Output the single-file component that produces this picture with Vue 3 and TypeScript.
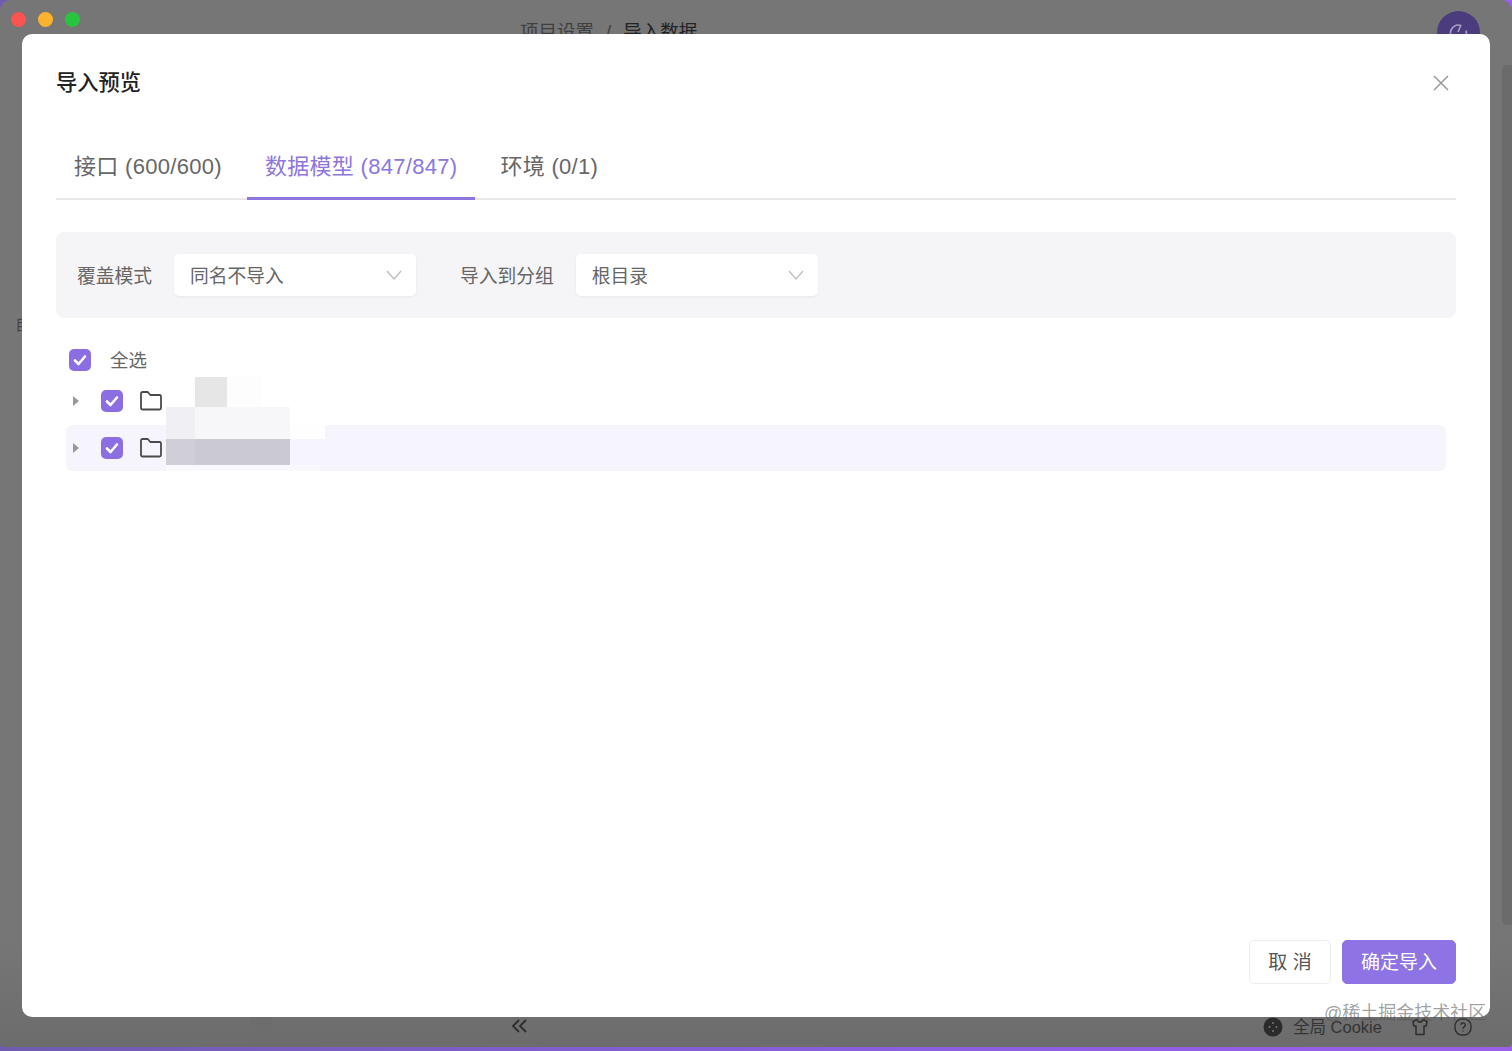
<template>
  <div class="desktop">
    <div class="window">
      <span class="dot red"></span>
      <span class="dot yellow"></span>
      <span class="dot green"></span>
      <div class="crumbs">项目设置<i>/</i><b>导入数据</b></div>
      <div class="avatar">
        <svg width="22" height="22" viewBox="0 0 22 22" fill="none" stroke="#a79fc6" stroke-width="1.6"><path d="M13 3.5a8 8 0 1 0 5 5" /><path d="M13 3l-3 7" /></svg>
      </div>
      <div class="side-letter">自</div>
      <div class="scrollbar"></div>
      <div class="side-item"></div>
      <div class="collapse">
        <svg width="18" height="14" viewBox="0 0 18 14" fill="none" stroke="#2e2e2e" stroke-width="1.8"><path d="M8 1 2 7l6 6M15 1 9 7l6 6" /></svg>
      </div>
      <div class="status">
        <svg width="20" height="20" viewBox="0 0 20 20"><circle cx="10" cy="10" r="9.500" fill="#2b2b2b" /><circle cx="6.500" cy="10" r="1" fill="#777" /><circle cx="13.500" cy="10" r="1" fill="#777" /><circle cx="10" cy="6" r="1" fill="#777" /><circle cx="10" cy="14" r="1" fill="#777" /></svg>
        <span class="cookie">全局 Cookie</span>
        <svg class="shirt" width="18" height="18" viewBox="0 0 18 18" fill="none" stroke="#2e2e2e" stroke-width="1.500" stroke-linejoin="round"><path d="M6 1.500 2 3.500 2.800 8H5v8.500h8V8h2.200L16 3.500l-4-2c-.4 1.600-1.500 2.500-3 2.500S6.400 3.100 6 1.500z" /></svg>
        <svg width="18" height="18" viewBox="0 0 18 18" fill="none" stroke="#2e2e2e" stroke-width="1.400"><rect x="1" y="1" width="16" height="16" rx="7" /><path d="M6.800 7a2.200 2.200 0 1 1 3.400 1.900c-.8.500-1.200 1-1.200 1.900" /><path d="M9 12.500v1" /></svg>
      </div>
    </div>

    <div class="modal">
      <header class="modal-head">
        <h2>导入预览</h2>
        <svg class="close" width="18" height="18" viewBox="0 0 18 18" fill="none" stroke="#999" stroke-width="1.500"><path d="M2 2l14 14M16 2 2 16" /></svg>
      </header>

      <nav class="tabs">
        <div
          v-for="(tab, i) in tabs"
          :key="tab"
          class="tab"
          :class="{ active: i === activeTab }"
          @click="activeTab = i"
        >{{ tab }}</div>
      </nav>

      <section class="filters">
        <label class="filter-label">覆盖模式</label>
        <div class="select">
          <span>同名不导入</span>
          <svg width="16" height="10" viewBox="0 0 16 10" fill="none" stroke="#bdbdbd" stroke-width="1.300"><path d="M1 1l7 8 7-8" /></svg>
        </div>
        <label class="filter-label second">导入到分组</label>
        <div class="select">
          <span>根目录</span>
          <svg width="16" height="10" viewBox="0 0 16 10" fill="none" stroke="#bdbdbd" stroke-width="1.300"><path d="M1 1l7 8 7-8" /></svg>
        </div>
      </section>

      <section class="tree">
        <div class="select-all">
          <span class="check">
            <svg width="14" height="12" viewBox="0 0 14 12" fill="none" stroke="#fff" stroke-width="2.600" stroke-linecap="round" stroke-linejoin="round"><path d="M2 6.500 5.500 10 12 2.500" /></svg>
          </span>
          <span class="all-text">全选</span>
        </div>
        <div v-for="row in rows" :key="row" class="tree-row" :class="{ hovered: row === 2 }">
          <span class="caret"></span>
          <span class="check">
            <svg width="14" height="12" viewBox="0 0 14 12" fill="none" stroke="#fff" stroke-width="2.600" stroke-linecap="round" stroke-linejoin="round"><path d="M2 6.500 5.500 10 12 2.500" /></svg>
          </span>
          <svg class="folder" width="22" height="20" viewBox="0 0 22 20" fill="none" stroke="#4a4a4a" stroke-width="1.800" stroke-linejoin="round"><path d="M1 2.500A1.500 1.500 0 0 1 2.500 1h5.300l2.500 3h9.200A1.500 1.500 0 0 1 21 5.500v11.500a1.500 1.500 0 0 1-1.500 1.500h-17A1.500 1.500 0 0 1 1 17z" /></svg>
        </div>
        <div
          v-for="(m, i) in mosaic"
          :key="i"
          class="mosaic"
          :style="{ left: m[0] + 'px', top: m[1] + 'px', width: m[2] + 'px', height: m[3] + 'px', background: m[4] }"
        ></div>
      </section>

      <footer class="modal-foot">
        <button class="btn">取 消</button>
        <button class="btn primary">确定导入</button>
      </footer>
    </div>

    <div class="watermark">@稀土掘金技术社区</div>
  </div>
</template>

<script setup lang="ts">
import { ref } from 'vue'

const tabs = ['接口 (600/600)', '数据模型 (847/847)', '环境 (0/1)']
const activeTab = ref(1)
const rows = [1, 2]

// blurred-out names, offsets are relative to the tree section
type Block = [number, number, number, number, string]
const mosaic: Block[] = [
  [139, 59, 32, 30, '#e6e6e6'],
  [171, 59, 35, 30, '#fdfdfd'],
  [110, 89, 29, 32, '#f0f0f4'],
  [139, 89, 95, 32, '#f7f7fa'],
  [234, 107, 35, 14, '#fefefe'],
  [110, 121, 29, 26, '#d0ced7'],
  [139, 121, 95, 26, '#cbc9d2'],
  [110, 147, 154, 6, '#f9f8fd'],
]
</script>

<style scoped>
.desktop {
  position: relative;
  width: 1512px;
  height: 1051px;
  overflow: hidden;
  background: linear-gradient(90deg, #6f5cb0, #8a5fe0 60%, #9a60e8);
  font-family: "Liberation Sans", "Noto Sans CJK SC", sans-serif;
}

.window {
  position: relative;
  height: 1047px;
  background: linear-gradient(#767676 0, #767676 90%, #6c6c6c 100%);
  border-radius: 11px 11px 4px 4px;
}

.dot {
  position: absolute;
  top: 12px;
  width: 15px;
  height: 15px;
  border-radius: 50%;
}
.dot.red { left: 11px; background: #f9544f; }
.dot.yellow { left: 38px; background: #fbb32d; }
.dot.green { left: 65px; background: #27c53f; }

.crumbs {
  position: absolute;
  left: 520px;
  top: 20px;
  font-size: 18.500px;
  line-height: 24px;
  color: #3f3f3f;
}
.crumbs i {
  margin: 0 12px;
  font-style: normal;
}
.crumbs b {
  font-weight: 400;
  color: #222;
}

.avatar {
  position: absolute;
  left: 1437px;
  top: 11px;
  width: 43px;
  height: 43px;
  border-radius: 50%;
  background: #4a3c7d;
  display: flex;
  align-items: center;
  justify-content: center;
}

.side-letter {
  position: absolute;
  left: 15px;
  top: 311px;
  font-size: 16px;
  color: #444;
}

.scrollbar {
  position: absolute;
  left: 1502px;
  top: 65px;
  width: 10px;
  height: 860px;
  background: #6b6b6b;
  border-radius: 5px 0 0 5px;
}

.side-item {
  position: absolute;
  left: 250px;
  top: 1017px;
  width: 22px;
  height: 12px;
  border-radius: 0 0 11px 11px;
  background: #6d6d6d;
}

.collapse {
  position: absolute;
  left: 511px;
  top: 1019px;
  line-height: 0;
}

.status {
  position: absolute;
  left: 1263px;
  top: 1017px;
  display: flex;
  align-items: center;
  height: 20px;
}
.cookie {
  margin: -3px 0 0 10px;
  font-size: 16.500px;
  color: #333;
  white-space: nowrap;
}
.shirt {
  margin: 0 25px 0 29px;
}

.modal {
  position: absolute;
  left: 22px;
  top: 34px;
  width: 1468px;
  height: 983px;
  box-sizing: border-box;
  padding: 0 34px;
  background: #fff;
  border-radius: 10px;
  display: flex;
  flex-direction: column;
}

.modal-head {
  height: 98px;
  display: flex;
  align-items: center;
  justify-content: space-between;
}
.modal-head h2 {
  margin: 0;
  font-size: 21.250px;
  font-weight: 500;
  line-height: 30px;
  color: #222;
}
.close {
  margin-right: 6px;
}

.tabs {
  height: 68px;
  box-sizing: border-box;
  display: flex;
  gap: 7px;
  border-bottom: 2px solid #e8e8e8;
}
.tab {
  padding: 20px 18px 0;
  height: 68px;
  box-sizing: border-box;
  font-size: 22px;
  letter-spacing: 0.3px;
  line-height: 30px;
  color: #666;
  cursor: pointer;
  white-space: nowrap;
}
.tab.active {
  color: #8d76de;
  border-bottom: 3px solid #8d76de;
}

.filters {
  margin-top: 32px;
  height: 86px;
  box-sizing: border-box;
  padding: 0 21px;
  display: flex;
  align-items: center;
  background: #f5f5f7;
  border-radius: 8px;
}
.filter-label {
  margin-right: 22px;
  padding-bottom: 2px;
  font-size: 18.750px;
  color: #666;
  white-space: nowrap;
}
.filter-label.second {
  margin-left: 44px;
}

.select {
  width: 242px;
  height: 42px;
  box-sizing: border-box;
  padding: 0 14px 0 16px;
  display: flex;
  align-items: center;
  justify-content: space-between;
  background: #fff;
  border-radius: 5px;
  box-shadow: 0 1px 3px rgba(0, 0, 0, 0.06);
  font-size: 18.750px;
  color: #666;
}
.select span {
  padding-bottom: 2px;
}

.tree {
  position: relative;
  flex: 1;
  padding: 0 10px;
}
.select-all {
  height: 32px;
  margin: 26px 0 2px;
  padding-left: 3px;
  display: flex;
  align-items: center;
  gap: 19px;
  font-size: 18.500px;
  color: #666;
}
.all-text {
  padding-bottom: 2px;
}
.tree-row {
  height: 46px;
  margin-bottom: 1px;
  display: flex;
  align-items: center;
  border-radius: 6px;
}
.tree-row.hovered {
  background: #f6f5fd;
}
.caret {
  width: 0;
  height: 0;
  margin: 0 22px 0 7px;
  border-left: 6px solid #999;
  border-top: 5px solid transparent;
  border-bottom: 5px solid transparent;
}
.check {
  flex: none;
  width: 22px;
  height: 22px;
  border-radius: 5px;
  background: #8b6fe2;
  display: flex;
  align-items: center;
  justify-content: center;
}
.folder {
  margin-left: 17px;
}
.mosaic {
  position: absolute;
}

.modal-foot {
  height: 77px;
  display: flex;
  justify-content: flex-end;
  gap: 11px;
}
.btn {
  height: 44px;
  padding: 0 0 3px;
  width: 82px;
  font-family: inherit;
  font-size: 19px;
  color: #555;
  background: #fff;
  border: 1px solid #ececec;
  border-radius: 5px;
  cursor: pointer;
}
.btn.primary {
  width: 114px;
  color: #fff;
  background: #8d73e3;
  border-color: #8d73e3;
}

.watermark {
  position: absolute;
  left: 1324px;
  top: 1001px;
  font-size: 18px;
  line-height: 24px;
  color: rgba(80, 80, 80, 0.55);
  white-space: nowrap;
}
</style>
